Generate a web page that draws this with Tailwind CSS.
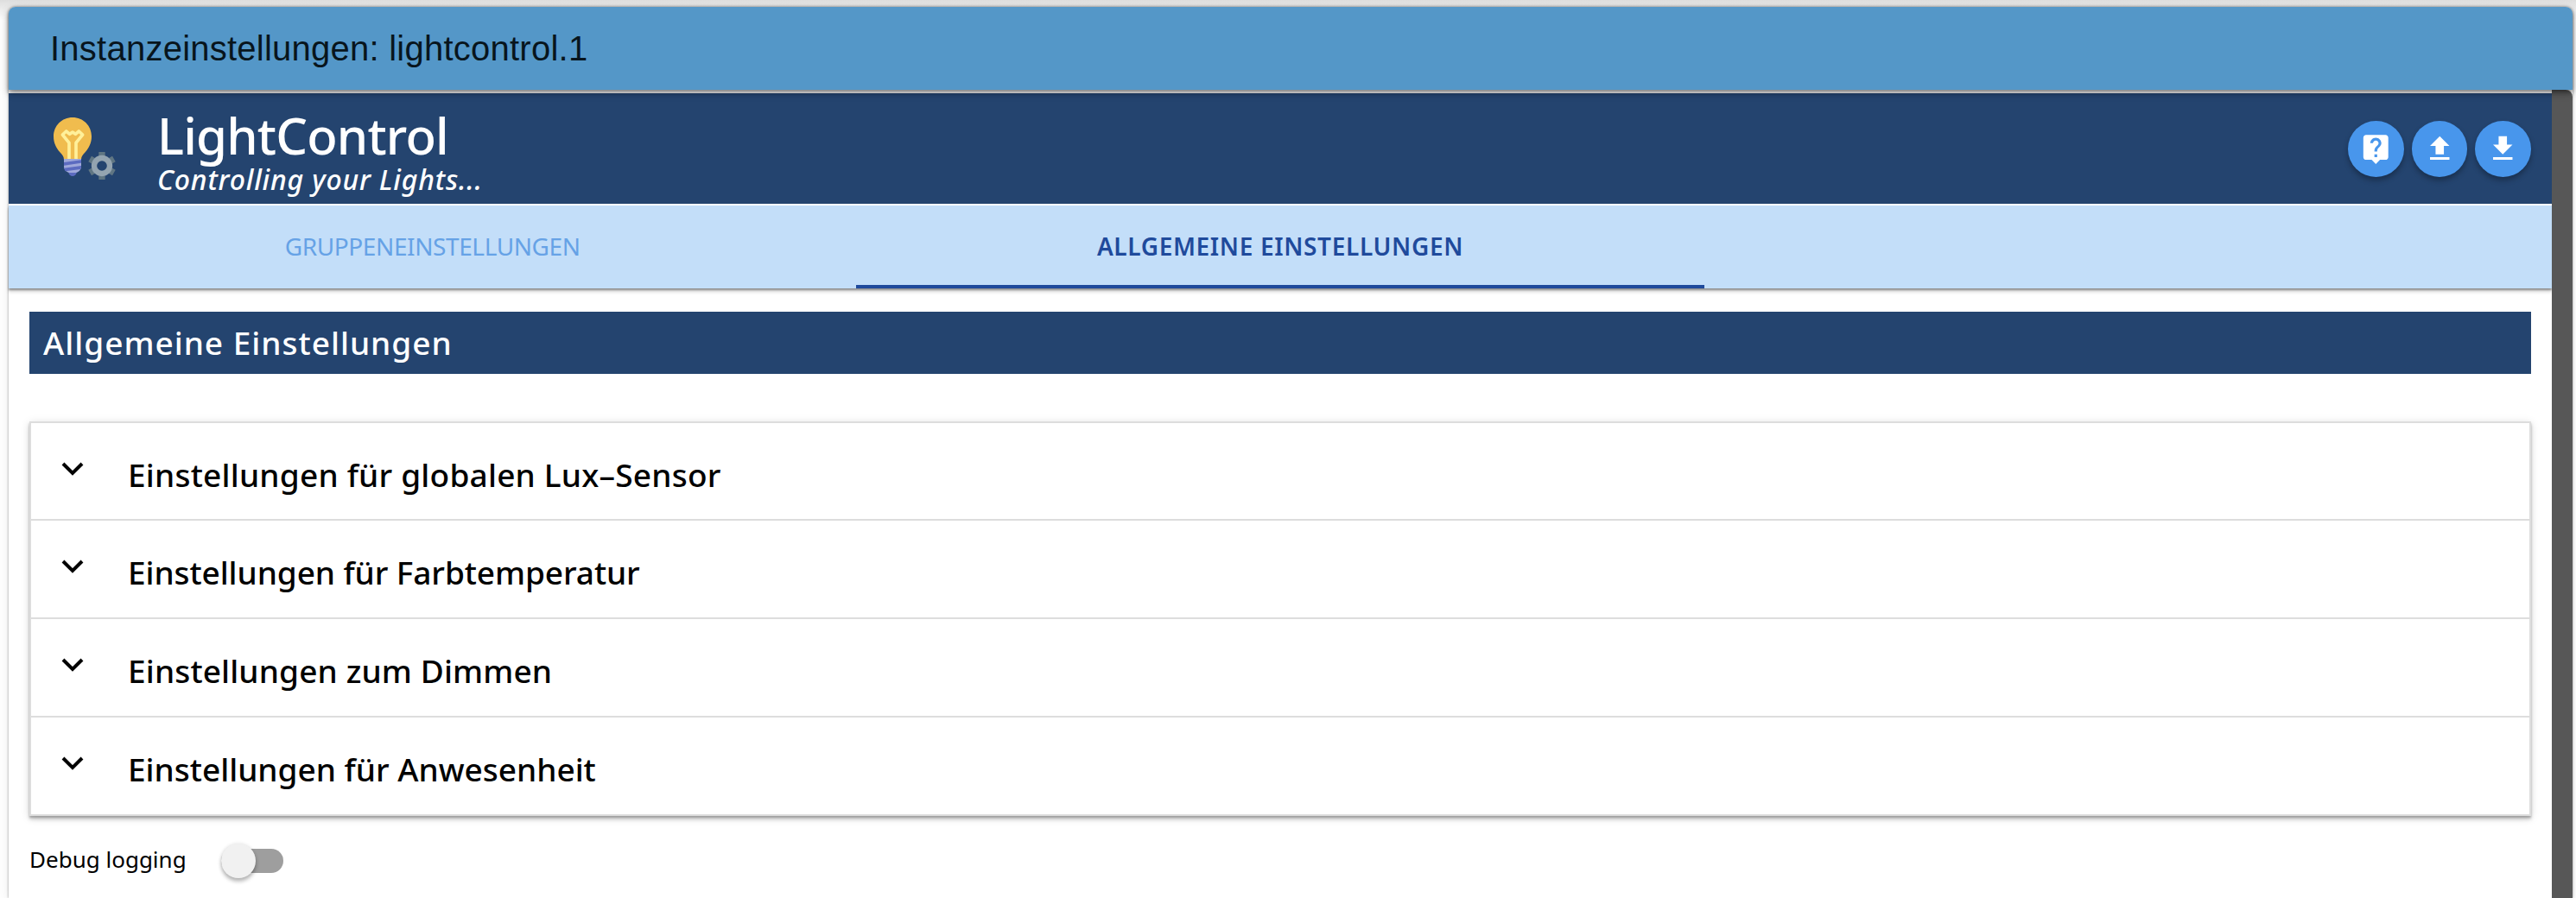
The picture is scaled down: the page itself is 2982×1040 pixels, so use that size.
<!DOCTYPE html>
<html lang="de">
<head>
<meta charset="utf-8">
<title>Instanzeinstellungen: lightcontrol.1</title>
<script src="https://cdn.jsdelivr.net/npm/@tailwindcss/browser@4"></script>
</head>
<body class="h-[1040px] w-[2982px] overflow-hidden bg-gradient-to-b from-[#dedede] to-white to-[24px] px-[10px] pt-2 pr-1 font-['Noto_Sans',sans-serif] text-black">
<div class="flex h-[1032px] flex-col rounded-t-lg bg-white shadow-[0_0_3px_rgba(0,0,0,0.4),0_4px_16px_rgba(0,0,0,0.08)]">
  <header class="relative z-10 flex h-24 shrink-0 items-center rounded-t-lg bg-[#5497c8] pl-12 font-['Liberation_Sans',sans-serif] text-[40px] tracking-[0.24px] text-[#08151d] shadow-[0_4px_8px_rgba(0,0,0,0.35),0_2px_4px_rgba(0,0,0,0.3)]">Instanzeinstellungen: lightcontrol.1</header>
  <div class="flex min-h-0 flex-1">
    <main class="flex flex-1 flex-col">
      <div class="mt-1 flex h-32 shrink-0 items-start bg-[#24446f] pr-6 pl-[30px]">
        <svg class="mt-3 h-[100px] w-[110px]" viewBox="0 0 330 300">
          <path fill="#f0bc4e" d="M132 48c-37 0-66 29-66 66 0 24 10 40 22 55 8 9 14 15 14 25h60c0-10 6-16 14-25 12-15 22-31 22-55 0-37-29-66-66-66z"/>
          <path fill="none" stroke="#fff09a" stroke-width="11" stroke-linejoin="round" d="M120 192v-56L97 108l13-12 12 10 10-7 10 7 12-10 13 12-23 28v56"/>
          <path fill="#9fa8da" d="M102 192h60v26c0 12-10 22-22 22h-16c-12 0-22-10-22-22z"/>
          <path fill="#5c6bc0" d="M102 204l60-8v10l-60 9zM102 224l60-8v5l-3 7-52 7zM118 240h28c-1 7-7 12-14 12s-13-5-14-12z"/>
          <g fill="#607683"><path d="M223 168h22v96h-22z"/><path d="M223 168h22v96h-22z" transform="rotate(60 234 216)"/><path d="M223 168h22v96h-22z" transform="rotate(120 234 216)"/></g>
          <circle cx="234" cy="216" r="27" fill="#24446f" stroke="#94a4b0" stroke-width="19"/>
        </svg>
        <div class="mt-[15px] ml-[32px] flex flex-1 flex-col items-start text-white">
          <h1 class="h-[64px] text-[58px] leading-[68px] font-medium tracking-[-0.8px]">LightControl</h1>
          <p class="text-[32px] leading-[42px] font-medium tracking-[0.8px] italic">Controlling your Lights...</p>
        </div>
        <div class="mt-8 flex gap-[9px]">
          <button class="flex size-[64.7px] items-center justify-center rounded-full bg-[#4896ec] shadow-[0_4px_6px_rgba(0,0,0,0.3)]"><svg class="size-[38.5px] fill-white" viewBox="0 0 24 24"><path d="M19 2H5c-1.11 0-2 .9-2 2v14c0 1.1.89 2 2 2h4l3 3 3-3h4c1.1 0 2-.9 2-2V4c0-1.1-.9-2-2-2zm-6 16h-2v-2h2v2zm2.07-7.75l-.9.92C13.45 11.9 13 12.5 13 14h-2v-.5c0-1.1.45-2.1 1.17-2.83l1.24-1.26c.37-.36.59-.86.59-1.41 0-1.1-.9-2-2-2s-2 .9-2 2H8c0-2.21 1.79-4 4-4s4 1.79 4 4c0 .88-.36 1.68-.93 2.25z"/></svg></button>
          <button class="flex size-[64.7px] items-center justify-center rounded-full bg-[#4896ec] shadow-[0_4px_6px_rgba(0,0,0,0.3)]"><svg class="size-[38.5px] fill-white" viewBox="0 0 24 24"><path d="M9 16h6v-6h4l-7-7-7 7h4zm-4 2h14v2H5z"/></svg></button>
          <button class="flex size-[64.7px] items-center justify-center rounded-full bg-[#4896ec] shadow-[0_4px_6px_rgba(0,0,0,0.3)]"><svg class="size-[38.5px] fill-white" viewBox="0 0 24 24"><path d="M19 9h-4V3H9v6H5l7 7 7-7zM5 18v2h14v-2H5z"/></svg></button>
        </div>
      </div>
      <nav class="mt-0.5 grid h-24 shrink-0 grid-cols-3 bg-[#c3def9] text-center text-[28px] leading-[94px] shadow-[0_4px_4px_rgba(0,0,0,0.16),0_2px_2px_rgba(0,0,0,0.35)]">
        <a class="tracking-[-0.4px] text-[#66a2e6]">GRUPPENEINSTELLUNGEN</a>
        <a class="h-24 border-b-4 border-[#1f4a9c] font-semibold tracking-[0.65px] text-[#1f4a9c]">ALLGEMEINE EINSTELLUNGEN</a>
      </nav>
      <section class="flex flex-col items-stretch px-6 pt-[27px]">
        <h2 class="h-[72px] bg-[#24446f] pl-4 text-[37px] leading-[72px] font-medium tracking-[1px] text-white">Allgemeine Einstellungen</h2>
        <ul class="mt-[55px] divide-y-2 divide-[#ddd] border-2 border-[#ddd] text-[37px] leading-[120px] font-medium shadow-[0_4px_4px_rgba(0,0,0,0.16),0_2px_10px_rgba(0,0,0,0.14),0_2px_2px_rgba(0,0,0,0.2)]">
          <li class="flex h-[113px] items-start pl-[35px] tracking-[0.22px]"><svg class="mt-[45px] mr-[51px] h-4 w-[26px]" viewBox="0 0 26 16"><path d="M2 2l11 11L24 2" fill="none" stroke="#000" stroke-width="4"/></svg>Einstellungen für globalen Lux–Sensor</li>
          <li class="flex h-[114px] items-start pl-[35px] tracking-[-0.08px]"><svg class="mt-[45px] mr-[51px] h-4 w-[26px]" viewBox="0 0 26 16"><path d="M2 2l11 11L24 2" fill="none" stroke="#000" stroke-width="4"/></svg>Einstellungen für Farbtemperatur</li>
          <li class="flex h-[114px] items-start pl-[35px] tracking-[0.15px]"><svg class="mt-[45px] mr-[51px] h-4 w-[26px]" viewBox="0 0 26 16"><path d="M2 2l11 11L24 2" fill="none" stroke="#000" stroke-width="4"/></svg>Einstellungen zum Dimmen</li>
          <li class="flex h-[112px] items-start pl-[35px]"><svg class="mt-[45px] mr-[51px] h-4 w-[26px]" viewBox="0 0 26 16"><path d="M2 2l11 11L24 2" fill="none" stroke="#000" stroke-width="4"/></svg>Einstellungen für Anwesenheit</li>
        </ul>
        <label class="mt-[30px] flex h-[44px] items-center text-[26px]"><span class="-mt-1">Debug logging</span>
          <span class="ml-[40px] flex h-7 w-[72px] items-center rounded-full bg-[#9e9e9e]"><span class="size-10 shrink-0 rounded-full bg-[#f1f1f1] shadow-[0_4px_4px_rgba(0,0,0,0.25),0_0_4px_rgba(0,0,0,0.12)]"></span></span>
        </label>
      </section>
    </main>
    <div class="w-6 rounded-tr-lg bg-[#575757]"></div>
  </div>
</div>
</body>
</html>
